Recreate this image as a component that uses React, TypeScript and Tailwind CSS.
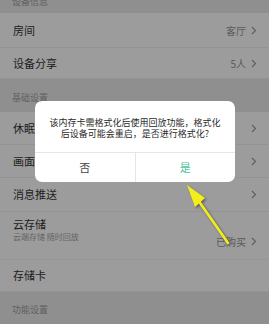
import React from "react";

const font = { fontFamily: '"Noto Sans CJK SC", "Noto Sans", sans-serif' };

function Chevron() {
  return (
    <svg width="6" height="9" viewBox="0 0 6 9" className="ml-[5px]">
      <polyline points="1,1 4.5,4.5 1,8" fill="none" stroke="#5e5e5e" strokeWidth="1.1" />
    </svg>
  );
}

function Row({ label, value, h, sub, chevron = true }: { label: string; value?: string; h: string; sub?: string; chevron?: boolean }) {
  return (
    <div className={`flex items-center justify-between pl-[13px] pr-[12px] bg-[#9c9c9c] border-b border-[#939393] ${h}`}>
      <div className="flex flex-col">
        <span className="text-[11px] leading-[13px] text-[#1c1c1c]">{label}</span>
        {sub && <span className="text-[8px] leading-[12px] text-[#656565]">{sub}</span>}
      </div>
      <div className="flex items-center text-[10px] text-[#5a5a5a]">
        {value && <span>{value}</span>}
        {chevron && <Chevron />}
      </div>
    </div>
  );
}

function Header({ label, h, cls, textCls = "" }: { label: string; h: string; cls: string; textCls?: string }) {
  return (
    <div className={`bg-[#8f8f8f] pl-[12px] overflow-hidden flex ${h} ${cls}`}>
      <span className={`text-[9px] leading-[11px] text-[#5f5f5f] ${textCls}`}>{label}</span>
    </div>
  );
}

export default function App() {
  return (
    <div className="relative w-[269px] h-[324px] overflow-hidden bg-[#9c9c9c]" style={font}>
      <Header label="设备信息" h="h-[13px]" cls="items-start" textCls="-mt-[4px]" />
      <Row label="房间" value="客厅" h="h-[35px]" />
      <Row label="设备分享" value="5人" h="h-[31px]" />
      <Header label="基础设置" h="h-[33px]" cls="items-center pt-[3px]" />
      <Row label="休眠" h="h-[33px]" />
      <Row label="画面" h="h-[33px]" />
      <Row label="消息推送" h="h-[34px]" />
      <div className="flex items-start justify-between pl-[13px] pr-[12px] pt-[6px] bg-[#9c9c9c] border-b border-[#969696] h-[48px]">
        <div className="flex flex-col">
          <span className="text-[11px] leading-[13px] text-[#1c1c1c]">云存储</span>
          <span className="text-[8px] leading-[12px] text-[#656565]">云端存储 随时回放</span>
        </div>
        <div className="flex items-center text-[10px] text-[#5a5a5a] mt-[16px]">
          <span>已购买</span>
          <Chevron />
        </div>
      </div>
      <Row label="存储卡" h="h-[32px]" chevron={false} />
      <Header label="功能设置" h="h-[40px]" cls="items-start pt-[12px]" />

      {/* dialog */}
      <div className="absolute left-[35px] top-[101px] w-[200px] h-[81px] bg-white rounded-[7px] flex flex-col">
        <div className="h-[52px] flex items-center justify-center px-[12px] border-b border-[#e6e6e6]">
          <p className="text-[9px] leading-[11px] text-[#2a2a2a] text-center pt-[3px]">
            该内存卡需格式化后使用回放功能，格式化后设备可能会重启，是否进行格式化?
          </p>
        </div>
        <div className="flex flex-1">
          <div className="flex-1 flex items-center justify-center text-[11px] text-[#444] border-r border-[#e6e6e6]">否</div>
          <div className="flex-1 flex items-center justify-center text-[11px] text-[#4cc49e]">是</div>
        </div>
      </div>

      {/* arrow */}
      <svg className="absolute left-0 top-0" width="269" height="324" viewBox="0 0 269 324">
        <defs>
          <filter id="sh" x="-20%" y="-20%" width="140%" height="140%">
            <feGaussianBlur stdDeviation="1.2" />
          </filter>
        </defs>
        <g filter="url(#sh)" opacity="0.55" transform="translate(1.5,1.5)">
          <line x1="198" y1="200" x2="228" y2="243" stroke="#333" strokeWidth="3" />
          <polygon points="187,185 195,207 205,198" fill="#333" />
        </g>
        <line x1="198" y1="200" x2="228" y2="243" stroke="#f2ee1c" strokeWidth="2.6" strokeLinecap="round" />
        <polygon points="187,185 195,207 205,198" fill="#f2ee1c" />
      </svg>
    </div>
  );
}
